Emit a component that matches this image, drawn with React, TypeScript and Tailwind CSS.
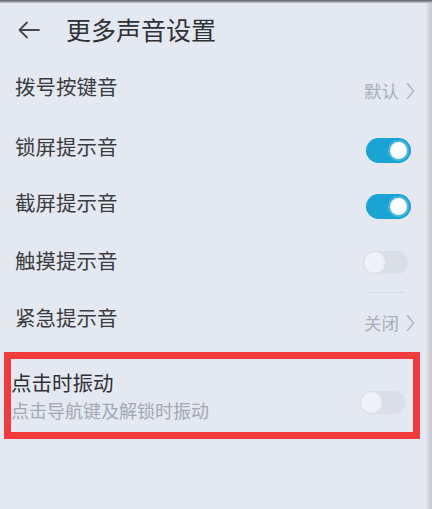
import React from "react";

const font = { fontFamily: '"Noto Sans CJK SC", "Noto Sans", sans-serif' };

function Chevron() {
  return (
    <svg width="9" height="18" viewBox="0 0 9 18" className="ml-[7px]">
      <polyline points="1.5,1.5 7.5,9 1.5,16.5" fill="none" stroke="#b4b9c2" strokeWidth="1.6" strokeLinecap="round" strokeLinejoin="round" />
    </svg>
  );
}

function Toggle({ on }: { on: boolean }) {
  if (on) {
    return (
      <div className="w-[45px] h-[25px] rounded-full bg-[#1aa4d6] flex items-center justify-end pr-[2px]">
        <div className="w-[21px] h-[21px] rounded-full bg-white border-[2px] border-[#4bb8dd]" />
      </div>
    );
  }
  return (
    <div className="w-[45px] h-[23px] rounded-full bg-[#dadee6] flex items-center pl-[1px]">
      <div className="w-[21px] h-[21px] rounded-full bg-[#eef1f6]" />
    </div>
  );
}

function Row({ label, right, h }: { label: string; right: React.ReactNode; h: string }) {
  return (
    <div className={`flex items-center justify-between pl-[15px] pr-[15px] ${h}`}>
      <span className="text-[20.5px] text-[#3a3c40] leading-none">{label}</span>
      {right}
    </div>
  );
}

function Value({ text, drop }: { text: string; drop: string }) {
  return (
    <div className={`flex items-center -mr-[4px] ${drop}`}>
      <span className="text-[17.5px] text-[#aaafb8] leading-none">{text}</span>
      <Chevron />
    </div>
  );
}

export default function App() {
  return (
    <div className="w-[432px] h-[509px] bg-[#e4e8f1] flex flex-col overflow-hidden" style={font}>
      <div className="h-[3px] bg-gradient-to-b from-[#5a5c62] to-[#c8ccd4]" />
      <div className="flex flex-1">
        <div className="flex-1 flex flex-col">
          {/* header */}
          <div className="h-[53px] flex items-center pl-[18px]">
            <svg width="22" height="18" viewBox="0 0 22 18">
              <path d="M21 9H2M9 1.5L1.5 9L9 16.5" fill="none" stroke="#45474c" strokeWidth="1.8" strokeLinecap="round" strokeLinejoin="round" />
            </svg>
            <span className="ml-[26px] text-[25px] text-[#2f3135] leading-none">更多声音设置</span>
          </div>

          <Row label="拨号按键音" right={<Value text="默认" drop="mt-[8px]" />} h="h-[61px]" />
          <Row label="锁屏提示音" right={<div className="mt-[7px]"><Toggle on /></div>} h="h-[59px]" />
          <Row label="截屏提示音" right={<div className="mt-[7px]"><Toggle on /></div>} h="h-[53px]" />
          <Row label="触摸提示音" right={<div className="mt-[4px] mr-[3px]"><Toggle on={false} /></div>} h="h-[63px]" />
          <div className="h-px ml-[370px] mr-[21px] bg-[#d6dae2]" />
          <Row label="紧急提示音" right={<Value text="关闭" drop="mt-[12px]" />} h="h-[48px]" />

          {/* highlighted row */}
          <div className="mt-[11px] ml-[4px] mr-[6px] h-[87px] border-[7px] border-[#f23a3c] flex items-center justify-between pr-[8px]">
            <div className="flex flex-col">
              <span className="text-[20.5px] text-[#2f3135] leading-none">点击时振动</span>
              <span className="mt-[9px] text-[18px] text-[#a3a8b1] leading-none">点击导航键及解锁时振动</span>
            </div>
            <div className="mt-[14px]">
              <Toggle on={false} />
            </div>
          </div>
        </div>
        <div className="w-[6px] bg-gradient-to-r from-[#dfe2ea] to-[#c4c7ce]" />
      </div>
    </div>
  );
}
